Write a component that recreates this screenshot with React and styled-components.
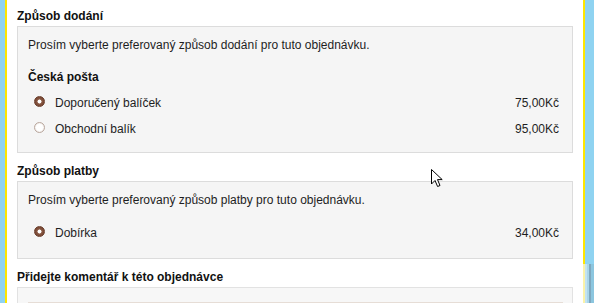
import React from 'react';
import styled, { createGlobalStyle } from 'styled-components';

const GlobalStyle = createGlobalStyle`
  html, body {
    margin: 0;
    padding: 0;
    background: #ffffff;
  }
  body {
    font-family: "Liberation Sans", Arial, sans-serif;
    font-size: 12px;
    color: #1e1e1e;
  }
`;

const Frame = styled.div`
  display: flex;
  width: 594px;
  height: 303px;
  overflow: hidden;
`;

const LeftEdge = styled.div`
  flex: 0 0 7px;
  background: linear-gradient(to right, #8fd3f1 0 5px, #ffe600 5px 7px);
`;

const RightEdge = styled.div`
  flex: 0 0 11px;
  display: flex;
  flex-direction: column;
`;

const RightTop = styled.div`
  flex: 0 0 264px;
  background: linear-gradient(to right, #ffe600 0 2px, #8fd3f1 2px);
`;

const RightBottom = styled.div`
  flex: 1;
  background: linear-gradient(
    to right,
    #fbf2a8 0 2px,
    #c3e3f1 2px 4px,
    #a9d6ea 4px 6px,
    #7fa8bf 6px 8px,
    #8cc6df 8px
  );
`;

const Main = styled.div`
  position: relative;
  flex: 1;
  background: #fff;
  padding: 8px 10px 0 10px;
`;

const Section = styled.section`
  margin-bottom: 10px;
`;

const Heading = styled.h3`
  margin: 0 0 2px;
  font-size: 12px;
  line-height: 16px;
  font-weight: bold;
  color: #111;
`;

const Box = styled.div`
  background: #f5f5f5;
  border: 1px solid #dcdcdc;
  padding: 10px 13px ${({ $bottom }) => $bottom || 15}px 10px;
`;

const Intro = styled.p`
  margin: 0 0 ${({ $gap }) => $gap || 16}px;
  line-height: 16px;
`;

const Carrier = styled.div`
  font-weight: bold;
  line-height: 16px;
  margin-bottom: 10px;
  color: #111;
`;

const Options = styled.div`
  display: flex;
  flex-direction: column;
  gap: 10px;
`;

const OptionRow = styled.label`
  display: flex;
  align-items: flex-start;
  line-height: 16px;
  padding-left: 6px;
`;

const Radio = styled.span`
  flex: 0 0 auto;
  box-sizing: border-box;
  width: 11px;
  height: 11px;
  margin: 1px 10px 0 0;
  border-radius: 50%;
  background: ${({ $checked }) =>
    $checked
      ? 'radial-gradient(circle, #fff 0 1.7px, #8a5a45 2.3px, #7b4a36 4px)'
      : 'radial-gradient(circle, #fff 0 3px, #f3efec 4.5px)'};
  border: 1px solid ${({ $checked }) => ($checked ? '#6a3e2c' : '#b9a79d')};
`;

const OptionName = styled.span`
  flex: 1;
`;

const Price = styled.span`
  flex: 0 0 auto;
`;

const CommentBox = styled.div`
  background: #f7f7f7;
  border: 1px solid #e2e2e2;
  border-bottom: none;
  padding: 14px 9px 0 10px;
  height: 40px;
`;

const Comment = styled.div`
  height: 40px;
  border-top: 1px solid #e6ddd6;
  background: linear-gradient(to right, #f4f4f4 0 361px, #fafafa 361px);
`;

const Cursor = styled.svg`
  position: absolute;
  left: 424px;
  top: 169px;
  width: 13px;
  height: 19px;
`;

const Option = ({ name, price, checked }) => (
  <OptionRow>
    <Radio $checked={checked} />
    <OptionName>{name}</OptionName>
    <Price>{price}</Price>
  </OptionRow>
);

const App = () => (
  <Frame>
    <GlobalStyle />
    <LeftEdge />
    <Main>
      <Section>
        <Heading>Způsob dodání</Heading>
        <Box>
          <Intro>Prosím vyberte preferovaný způsob dodání pro tuto objednávku.</Intro>
          <Carrier>Česká pošta</Carrier>
          <Options>
            <Option name="Doporučený balíček" price="75,00Kč" checked />
            <Option name="Obchodní balík" price="95,00Kč" />
          </Options>
        </Box>
      </Section>
      <Section>
        <Heading>Způsob platby</Heading>
        <Box $bottom={17}>
          <Intro $gap={17}>Prosím vyberte preferovaný způsob platby pro tuto objednávku.</Intro>
          <Options>
            <Option name="Dobírka" price="34,00Kč" checked />
          </Options>
        </Box>
      </Section>
      <Section>
        <Heading>Přidejte komentář k této objednávce</Heading>
        <CommentBox>
          <Comment />
        </CommentBox>
      </Section>
      <Cursor viewBox="0 0 13 19">
        <path
          d="M0.5 0.5 L0.5 15 L4 11.5 L6.6 17.5 L9 16.5 L6.5 10.6 L11.2 10.6 Z"
          fill="#fff"
          stroke="#000"
          strokeWidth="1"
          strokeLinejoin="miter"
        />
      </Cursor>
    </Main>
    <RightEdge>
      <RightTop />
      <RightBottom />
    </RightEdge>
  </Frame>
);

export default App;
